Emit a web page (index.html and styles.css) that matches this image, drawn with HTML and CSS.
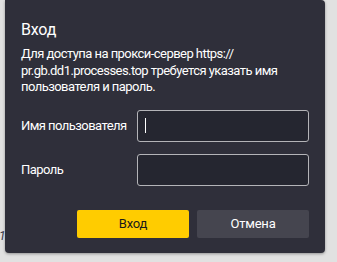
FILE: index.html
```html
<!DOCTYPE html>
<html lang="ru">
<head>
<meta charset="utf-8">
<link rel="stylesheet" href="styles.css">
</head>
<body>
<div class="page">
  <div class="behind"><span class="one">1</span></div>
  <div class="dialog">
    <div class="title">Вход</div>
    <div class="message">Для доступа на прокси-сервер https://<br>pr.gb.dd1.processes.top требуется указать имя<br>пользователя и пароль.</div>
    <div class="form">
      <div class="row">
        <span class="label">Имя пользователя</span>
        <div class="input"><span class="caret"></span></div>
      </div>
      <div class="row">
        <span class="label">Пароль</span>
        <div class="input"></div>
      </div>
    </div>
    <div class="buttons">
      <div class="btn primary">Вход</div>
      <div class="btn secondary">Отмена</div>
    </div>
  </div>
</div>
</body>
</html>
```
FILE: styles.css
```css
html, body {
  margin: 0;
  padding: 0;
  background: #e1e1e1;
  font-family: Roboto, "Noto Sans", sans-serif;
}
.page {
  display: flex;
  width: 337px;
  height: 262px;
  overflow: hidden;
}
.behind {
  width: 5px;
  position: relative;
  flex: none;
}
.one {
  position: absolute;
  left: -1px;
  top: 229px;
  font-size: 12px;
  font-style: italic;
  color: #334;
}
.dialog {
  width: 320px;
  height: 253px;
  box-sizing: border-box;
  background: #2f2f3a;
  border-radius: 0 4px 4px 4px;
  box-shadow: 0 1px 3px rgba(0,0,0,0.35);
  padding: 20px 16px 0 16px;
  color: #ffffff;
  display: flex;
  flex-direction: column;
  letter-spacing: -0.55px;
}
.title {
  font-size: 16px;
  line-height: 19px;
  letter-spacing: -0.2px;
}
.message {
  margin-top: 7px;
  font-size: 13px;
  line-height: 16.5px;
}
.form {
  margin-top: 14px;
  display: flex;
  flex-direction: column;
  gap: 12px;
}
.row {
  display: flex;
  align-items: center;
  justify-content: space-between;
}
.label {
  font-size: 13px;
}
.input {
  width: 172px;
  height: 32px;
  box-sizing: border-box;
  border: 1px solid #b4b4b8;
  border-radius: 3px;
  background: #252630;
  display: flex;
  align-items: center;
  padding-left: 7px;
}
.caret {
  width: 1px;
  height: 15px;
  background: #ffffff;
}
.buttons {
  margin-top: 24px;
  display: flex;
  justify-content: flex-end;
  gap: 8px;
}
.btn {
  width: 112px;
  height: 28px;
  border-radius: 2px;
  display: flex;
  align-items: center;
  justify-content: center;
  font-size: 13px;
  letter-spacing: -0.2px;
}
.primary {
  background: #ffcc00;
  color: #1a1a1a;
}
.secondary {
  background: #45454f;
  color: #ffffff;
}
```
